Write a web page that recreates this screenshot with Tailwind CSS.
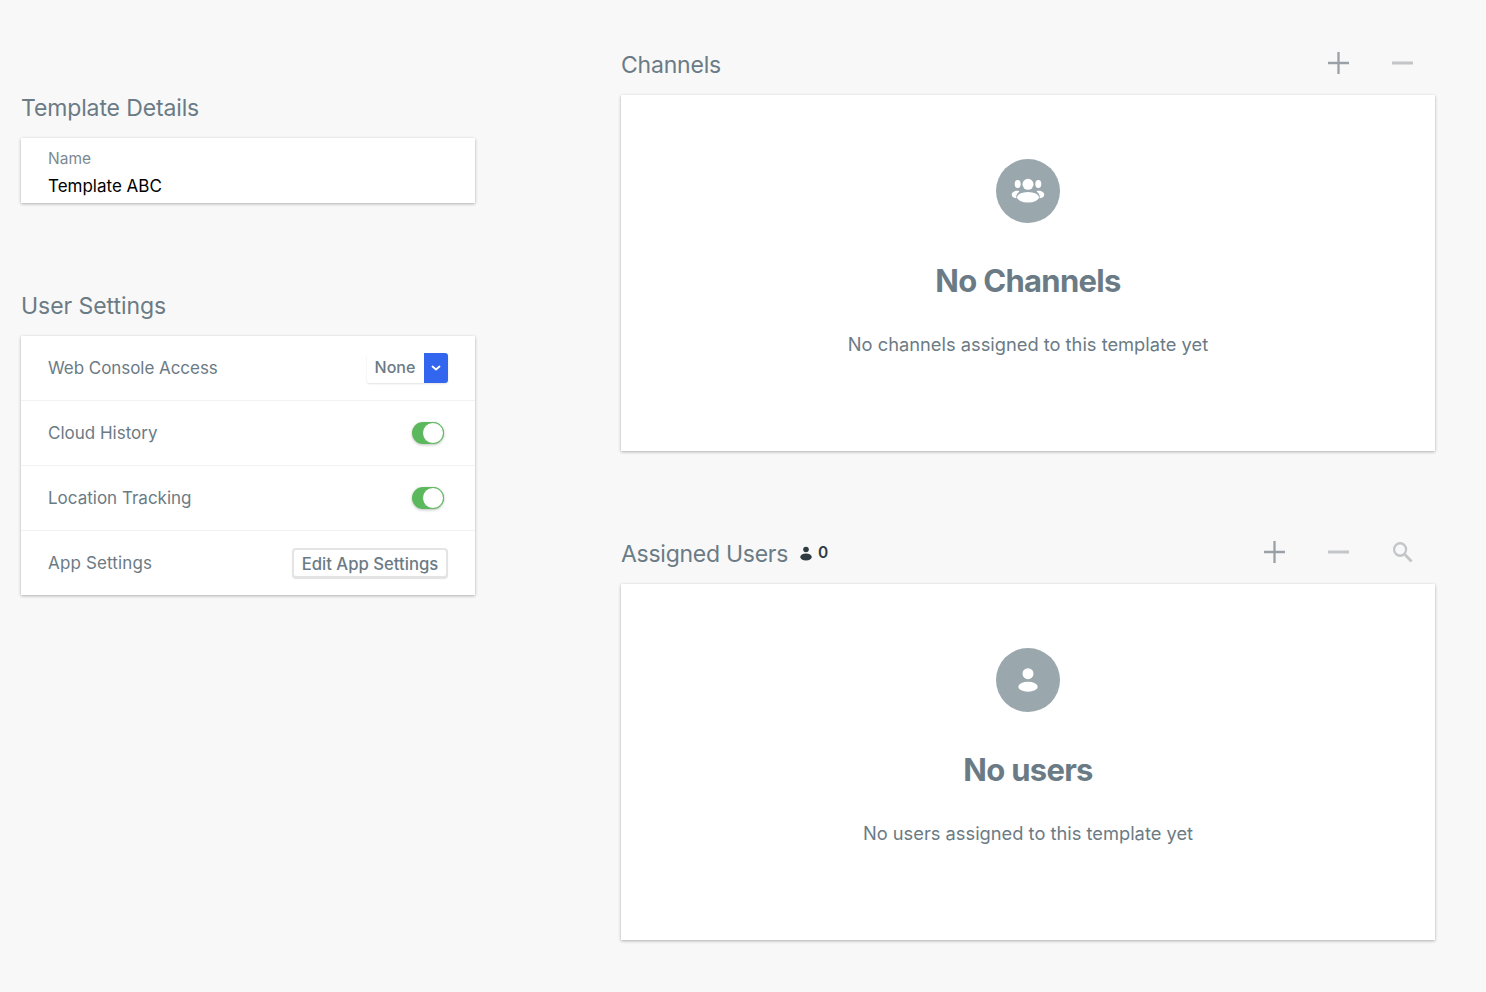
<!DOCTYPE html>
<html>
<head>
<meta charset="utf-8">
<script src="https://cdn.jsdelivr.net/npm/@tailwindcss/browser@4"></script>
</head>
<body class="bg-[#f8f8f8] font-['Inter',sans-serif] text-[#6b7b85]">
<div class="flex h-[992px] w-[1486px] overflow-hidden items-start">
  <div class="w-[454px] ml-[21px] mt-[92px] shrink-0">
    <h2 class="h-[32px] leading-[32px] text-[23px] tracking-[-0.13px]">Template Details</h2>
    <div class="mt-[14px] h-[65px] bg-white shadow-[0_1px_3px_rgba(0,0,0,0.3)] pl-[27px] pt-[11px]">
      <div class="text-[15.5px] leading-[20px] text-[#7b8a93]">Name</div>
      <div class="mt-[7px] text-[17px] leading-[20px] text-black">Template ABC</div>
    </div>
    <h2 class="mt-[87px] h-[32px] leading-[32px] text-[23px] tracking-[-0.05px]">User Settings</h2>
    <div class="mt-[14px] bg-white shadow-[0_1px_3px_rgba(0,0,0,0.3)] text-[17px]">
      <div class="h-[65px] pl-[27px] flex items-center justify-between border-b border-[#f2f2f2] pr-[27px]">
        <span class="mt-[2px] tracking-[-0.05px]">Web Console Access</span>
        <div class="flex h-[30px] w-[81px] rounded-[3px] shadow-[0_1px_2px_rgba(0,0,0,0.12)]">
          <span class="flex-1 flex items-center justify-center text-[16px] pr-px font-medium -mt-[2px]">None</span>
          <span class="w-[24px] bg-[#3366ee] rounded-r-[3px] flex items-center justify-center">
            <svg width="10" height="6" viewBox="0 0 10 6" fill="none" stroke="white" stroke-width="1.8" stroke-linecap="round" stroke-linejoin="round"><path d="M1.5 1.5 5 4.5 8.5 1.5"/></svg>
          </span>
        </div>
      </div>
      <div class="h-[65px] pl-[27px] flex items-center justify-between border-b border-[#f2f2f2] pr-[31px]">
        <span class="mt-[2px]">Cloud History</span>
        <div class="relative w-[32px] h-[22px] rounded-full bg-[#5cb85c] shadow-[0_1px_3px_rgba(0,0,0,0.25)]">
          <span class="absolute right-0 top-0 w-[22px] h-[22px] rounded-full bg-white border border-[#5cb85c]"></span>
        </div>
      </div>
      <div class="h-[65px] pl-[27px] flex items-center justify-between border-b border-[#f2f2f2] pr-[31px]">
        <span class="mt-[2px]">Location Tracking</span>
        <div class="relative w-[32px] h-[22px] rounded-full bg-[#5cb85c] shadow-[0_1px_3px_rgba(0,0,0,0.25)]">
          <span class="absolute right-0 top-0 w-[22px] h-[22px] rounded-full bg-white border border-[#5cb85c]"></span>
        </div>
      </div>
      <div class="h-[64px] pl-[27px] flex items-center justify-between pr-[27px]">
        <span class="mt-[2px] tracking-[0.15px]">App Settings</span>
        <button class="h-[30px] w-[156px] pt-[1px] rounded-[4px] border-2 border-[#e4e4e4] shadow-[0_1px_1px_rgba(0,0,0,0.12)] text-[16.7px] leading-[20px] font-medium bg-white text-[#6b7b85]">Edit App Settings</button>
      </div>
    </div>
  </div>
  <div class="w-[814px] ml-[146px] mt-[49px] shrink-0">
    <div class="flex items-center h-[32px] mb-[14px]">
      <h2 class="text-[23px] leading-[32px] tracking-[-0.2px]">Channels</h2>
      <div class="ml-auto flex items-center pr-[22px] gap-[43px] -mt-[5px]">
        <svg width="21" height="22" viewBox="0 0 22 22" preserveAspectRatio="none" fill="none" stroke="#9aa0a8" stroke-width="2.4"><path d="M11 0v22M0 11h22"/></svg>
        <svg width="21" height="22" viewBox="0 0 22 22" preserveAspectRatio="none" fill="none" stroke="#c3c5c8" stroke-width="3"><path d="M0 11h22"/></svg>
      </div>
    </div>
    <div class="h-[356px] bg-white shadow-[0_1px_3px_rgba(0,0,0,0.3)] flex flex-col items-center pt-[64px]">
      <div class="w-[64px] h-[64px] rounded-full bg-[#9aa8ae] flex items-center justify-center">
        <svg width="34" height="26" viewBox="0 0 34 26" fill="white"><circle cx="17" cy="6.300" r="5.500"/><ellipse cx="17" cy="19.300" rx="11" ry="5.300"/><ellipse cx="6.700" cy="6" rx="3" ry="4"/><ellipse cx="27.300" cy="6" rx="3" ry="4"/><path d="M6.500 12.700C3 12.700.7 14.500.7 17 .7 19 3 20 5.500 20.300 4.800 18 5.500 15.500 8.500 13.500 8 13 7.500 12.700 6.500 12.700z"/><path d="M27.500 12.700C31 12.700 33.300 14.500 33.300 17 33.300 19 31 20 28.500 20.300 29.200 18 28.500 15.500 25.500 13.500 26 13 26.500 12.700 27.500 12.700z"/></svg>
      </div>
      <div class="mt-[38px] text-[31px] leading-[40px] font-bold tracking-[-0.7px]">No Channels</div>
      <div class="mt-[31px] text-[18.3px] leading-[24px]">No channels assigned to this template yet</div>
    </div>
    <div class="flex items-center h-[32px] mt-[87px] mb-[14px]">
      <h2 class="text-[23px] leading-[32px] tracking-[-0.27px]">Assigned Users</h2>
      <div class="ml-[12px] flex items-center gap-[6px] text-[#2f3b42] text-[15.5px] font-semibold -mt-[2px]">
        <svg width="12" height="15" viewBox="0 0 12 15" fill="currentColor"><circle cx="6" cy="3.500" r="2.800"/><ellipse cx="6" cy="11" rx="5.800" ry="3.500"/></svg>
        <span class="-mt-px">0</span>
      </div>
      <div class="ml-auto flex items-center pr-[22px] gap-[43px] -mt-[5px]">
        <svg width="21" height="22" viewBox="0 0 22 22" preserveAspectRatio="none" fill="none" stroke="#9aa0a8" stroke-width="2.4"><path d="M11 0v22M0 11h22"/></svg>
        <svg width="21" height="22" viewBox="0 0 22 22" preserveAspectRatio="none" fill="none" stroke="#c3c5c8" stroke-width="3"><path d="M0 11h22"/></svg>
        <svg width="21" height="22" viewBox="0 0 22 22" preserveAspectRatio="none" fill="none" stroke="#c3c5c8" stroke-width="2.400"><circle cx="8.500" cy="8.500" r="6.300"/><path d="M13 13l7.500 7.500" stroke-width="3"/></svg>
      </div>
    </div>
    <div class="h-[356px] bg-white shadow-[0_1px_3px_rgba(0,0,0,0.3)] flex flex-col items-center pt-[64px]">
      <div class="w-[64px] h-[64px] rounded-full bg-[#9aa8ae] flex items-center justify-center">
        <svg width="20" height="26" viewBox="0 0 20 26" fill="white"><circle cx="10" cy="6.700" r="5.500"/><ellipse cx="10" cy="19.700" rx="9.700" ry="5"/></svg>
      </div>
      <div class="mt-[38px] text-[31px] leading-[40px] font-bold tracking-[-0.7px]">No users</div>
      <div class="mt-[31px] text-[18.3px] leading-[24px]">No users assigned to this template yet</div>
    </div>
  </div>
</div>
</body>
</html>
